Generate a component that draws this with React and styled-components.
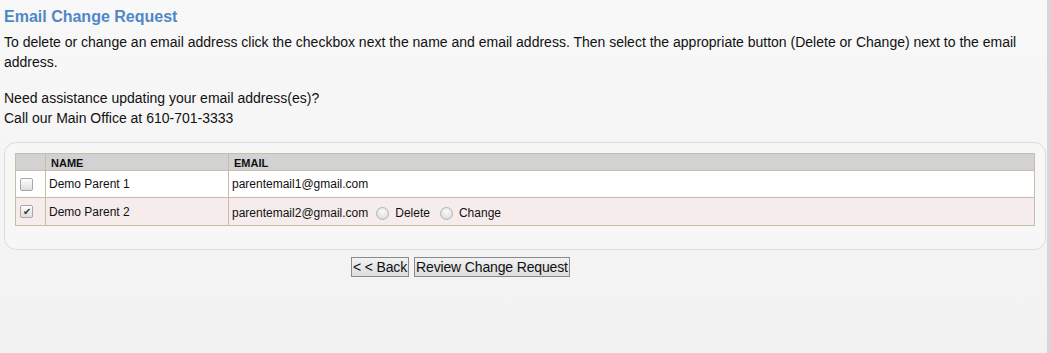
import styled, { createGlobalStyle } from "styled-components"

// ─── Page shell ────────────────────────────────────────────────

const Global = createGlobalStyle`
    html, body {
        margin: 0;
        padding: 0;
        background: #f5f5f5;
    }
    body {
        font-family: "Liberation Sans", Arial, sans-serif;
        color: #111;
    }
`

const Shell = styled.div`
    display: flex;
    min-height: 353px;
    background: linear-gradient( #f8f8f8, #f2f2f2 );
`

const Content = styled.div`
    flex: 1;
    padding: 7px 1px 0 4px;
`

const EdgeBar = styled.div`
    width: 4px;
    background: #d6d6d6;
`

// ─── Intro text ────────────────────────────────────────────────

const Title = styled.h2`
    font-size: 16px;
    font-weight: bold;
    color: #4f87c7;
    margin: 0 0 5px;
    line-height: 20px;
`

const Para = styled.p`
    font-size: 14px;
    line-height: 20px;
    margin: 0 0 ${ ( { $gap } ) => $gap || 0 }px;
    padding-right: 10px;
`

// ─── Panel + table ─────────────────────────────────────────────

const Panel = styled.div`
    margin-top: 14px;
    border: 1px solid #dcdcdc;
    border-radius: 12px;
    background: #f7f7f7;
    padding: 10px 10px 23px;
`

const Table = styled.table`
    width: 100%;
    border-collapse: collapse;
    border: 1px solid #c8bda9;
    font-size: 12px;
`

const HeadCell = styled.th`
    background: #d2d2d2;
    border: 1px solid #c8bda9;
    text-align: left;
    font-size: 11px;
    font-weight: bold;
    height: 17px;
    padding: 1px 5px 0;
    width: ${ ( { $w } ) => $w ? `${ $w }px` : 'auto' };
    box-sizing: border-box;
`

const Row = styled.tr`
    background: ${ ( { $alt } ) => $alt ? '#f6ecec' : '#ffffff' };
`

const Cell = styled.td`
    border: 1px solid #c8bda9;
    height: ${ ( { $tall } ) => $tall ? 27 : 26 }px;
    padding: 0 3px;
    vertical-align: middle;
`

const EmailWrap = styled.div`
    display: flex;
    align-items: center;
    gap: 6px;
    padding-top: ${ ( { $drop } ) => $drop ? 3 : 0 }px;
`

// ─── Form controls ─────────────────────────────────────────────

const Check = styled.span`
    display: flex;
    align-items: center;
    justify-content: center;
    width: 11px;
    height: 11px;
    margin-left: 1px;
    border: 1px solid #a8a8a8;
    border-radius: 2px;
    background: linear-gradient( #fdfdfd, #dedede );
    color: #333;
    font-size: 10px;
    line-height: 1;
`

const Radio = styled.span`
    display: inline-block;
    width: 11px;
    height: 11px;
    border: 1px solid #b4b4b4;
    border-radius: 50%;
    background: radial-gradient( circle at 50% 35%, #fafafa, #d4d4d4 );
    margin-left: 2px;
`

const RadioLabel = styled.span`
    margin-right: 2px;
`

// ─── Buttons ───────────────────────────────────────────────────

const Actions = styled.div`
    display: flex;
    gap: 5px;
    padding: 7px 0 0 347px;
`

const Btn = styled.button`
    font-family: "Liberation Sans", Arial, sans-serif;
    font-size: 14px;
    letter-spacing: -0.15px;
    color: #111;
    height: 20px;
    padding: 0 1px;
    border: 1px solid #8a8a8a;
    border-radius: 0;
    background: linear-gradient( #f2f2f2, #dddddd );
    line-height: 18px;
`

// ─── Data ──────────────────────────────────────────────────────

const parents = [
    { name: 'Demo Parent 1', email: 'parentemail1@gmail.com', checked: false },
    { name: 'Demo Parent 2', email: 'parentemail2@gmail.com', checked: true },
]

// ─── Component ─────────────────────────────────────────────────

export default function App() {

    return <>
        <Global />
        <Shell>
            <Content>

                <Title>Email Change Request</Title>
                <Para $gap={ 16 }>
                    To delete or change an email address click the checkbox next the name and email address. Then select the appropriate button (Delete or Change) next to the email address.
                </Para>
                <Para>Need assistance updating your email address(es)?</Para>
                <Para>Call our Main Office at 610-701-3333</Para>

                <Panel>
                    <Table>
                        <thead>
                            <tr>
                                <HeadCell $w={ 30 }></HeadCell>
                                <HeadCell $w={ 183 }>NAME</HeadCell>
                                <HeadCell>EMAIL</HeadCell>
                            </tr>
                        </thead>
                        <tbody>
                            { parents.map( ( p, i ) => <Row key={ p.name } $alt={ i % 2 === 1 }>
                                <Cell $tall={ p.checked }><Check>{ p.checked ? '✔' : '' }</Check></Cell>
                                <Cell $tall={ p.checked }>{ p.name }</Cell>
                                <Cell $tall={ p.checked }>
                                    <EmailWrap $drop={ p.checked }>
                                        <span>{ p.email }</span>
                                        { p.checked && <>
                                            <Radio />
                                            <RadioLabel>Delete</RadioLabel>
                                            <Radio />
                                            <RadioLabel>Change</RadioLabel>
                                        </> }
                                    </EmailWrap>
                                </Cell>
                            </Row> ) }
                        </tbody>
                    </Table>
                </Panel>

                <Actions>
                    <Btn>&lt; &lt; Back</Btn>
                    <Btn>Review Change Request</Btn>
                </Actions>

            </Content>
            <EdgeBar />
        </Shell>
    </>

}
